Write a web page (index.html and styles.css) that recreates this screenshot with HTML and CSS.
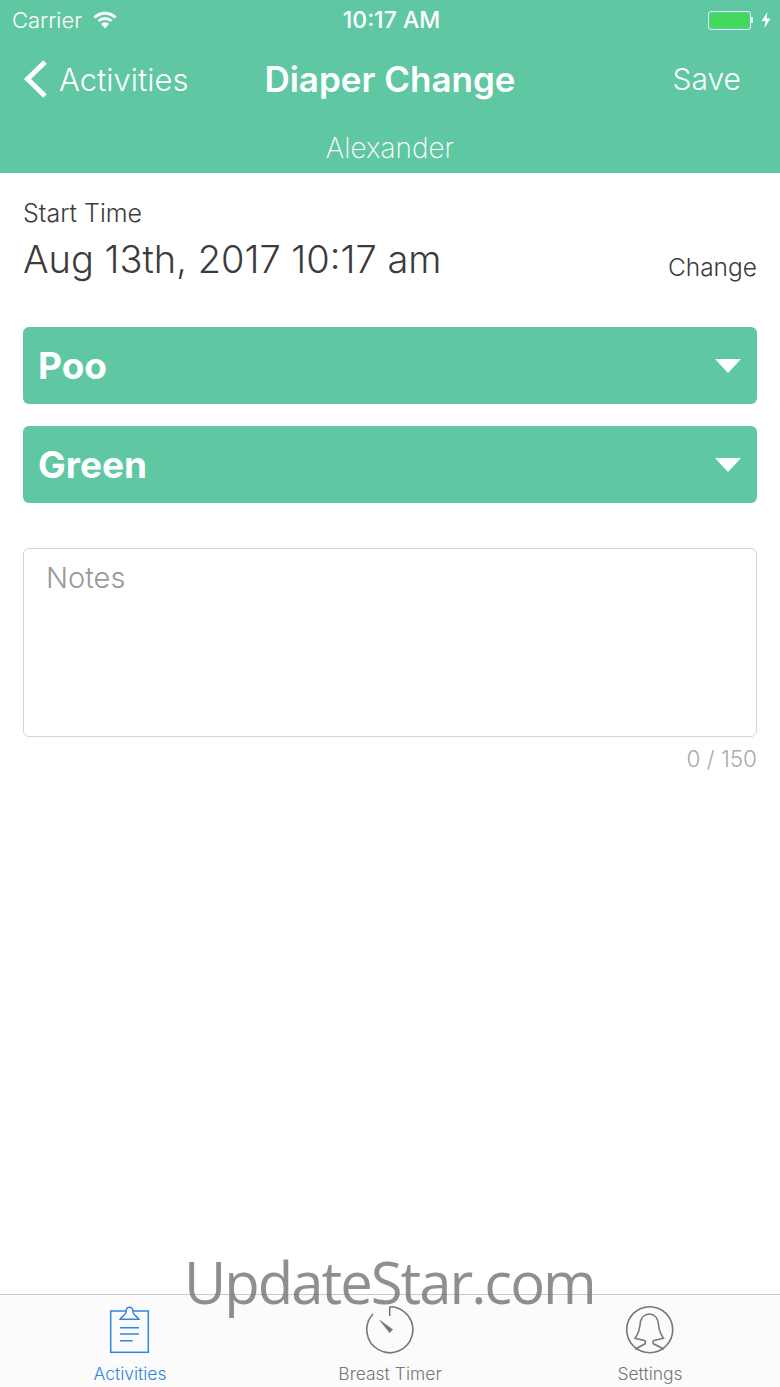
FILE: index.html
```html
<!DOCTYPE html>
<html lang="en">
<head>
  <meta charset="UTF-8">
  <meta name="viewport" content="width=device-width, initial-scale=1.0">
  <title>Diaper Change</title>
  <link rel="stylesheet" href="styles.css">
</head>
<body>
  <div class="app">
    <!-- header -->
    <header class="header">
      <div class="statusBar">
        <div class="statusLeft">
          <span>Carrier</span>
          <svg class="wifi" width="24" height="18" viewBox="0 0 24 18">
            <path d="M1.5 6.5 A15 15 0 0 1 22.500 6.500" />
            <path d="M5.5 10 A9.5 9.5 0 0 1 18.500 10" />
            <path class="wifiDot" d="M12 17.500 L8 12.700 A6 6 0 0 1 16 12.700 Z" />
          </svg>
        </div>
        <div class="statusTime">10:17 AM</div>
        <div class="statusRight">
          <div class="battery"><div class="batteryFill"></div></div>
          <div class="batteryTip"></div>
          <svg width="10" height="16" viewBox="0 0 10 16">
            <path d="M6.5 0 L0.5 9 H4.5 L3.5 16 L9.5 6.5 H5.5 Z" fill="#fff" />
          </svg>
        </div>
      </div>
      <div class="navBar">
        <div class="navLeft">
          <svg width="26" height="40" viewBox="0 0 26 40">
            <path d="M23 3 L5.500 20 L23 37" fill="none" stroke="#fff" stroke-width="5" />
          </svg>
          <span>Activities</span>
        </div>
        <div class="navTitle">Diaper Change</div>
        <div class="navRight">Save</div>
      </div>
      <div class="subtitle">Alexander</div>
    </header>

    <!-- form -->
    <main class="content">
      <div class="timeLabel">Start Time</div>
      <div class="timeRow">
        <div class="timeValue">Aug 13th, 2017 10:17 am</div>
        <div class="timeChange">Change</div>
      </div>

      <div class="dropdown dropdownFirst">
        <span>Poo</span>
        <div class="arrow"></div>
      </div>
      <div class="dropdown">
        <span>Green</span>
        <div class="arrow"></div>
      </div>

      <div class="notes">Notes</div>
      <div class="counter">0 / 150</div>
    </main>

    <!-- tab bar -->
    <nav class="tabBar">
      <div class="tab tabActive">
        <svg width="42" height="50" viewBox="0 0 42 50">
          <g fill="none" stroke="#2f86e0" stroke-width="1.5">
            <rect x="1.700" y="6" width="37.600" height="41.300" />
            <path d="M11 14.300 C13 11 17 10.500 17 7 C17 0.500 24 0.500 24 7 C24 10.500 28 11 30 14.300 Z" fill="#fbfbfb" />
            <path d="M11 22.700 H30 M11 29 H30 M11 35.700 H23.700" />
          </g>
        </svg>
        <span>Activities</span>
      </div>
      <div class="tab">
        <svg width="50" height="50" viewBox="0 0 50 50">
          <g fill="none" stroke="#777" stroke-width="1.6">
            <path d="M24.700 1.700 A23 23 0 1 1 8 9" />
            <path d="M24.700 1.700 V11" />
          </g>
          <path d="M13.500 14 L28 24.500 L24.500 28 Z" fill="#777" />
        </svg>
        <span>Breast Timer</span>
      </div>
      <div class="tab">
        <svg width="50" height="50" viewBox="0 0 50 50">
          <g fill="none" stroke="#777" stroke-width="1.6">
            <circle cx="24.700" cy="24.700" r="23" />
            <path d="M10 44.300 L20 38.800 C21 37 20.500 36 19.500 35.500 L10 33.300 C14 28 14.500 24 15 20 C15.500 12 20 9 24.300 9 C28.500 9 33 12 33.500 20 C34 24 34.500 28 38.500 33.300 L29 35.500 C28 36 27.500 37 28.500 38.800 L39 44.300" />
          </g>
        </svg>
        <span>Settings</span>
      </div>
    </nav>

    <div class="watermark">UpdateStar.com</div>
  </div>
</body>
</html>
```

FILE: styles.css
```css
/* base */
body {
  margin: 0;
  font-family: "Inter", "Liberation Sans", sans-serif;
  color: #3c3c3c;
  background-color: #fff;
}
.app {
  position: relative;
  width: 780px;
  height: 1387px;
  overflow: hidden;
  display: flex;
  flex-direction: column;
}
/* header */
.header {
  height: 173px;
  background-color: #5fc8a2;
  color: #fff;
}
.statusBar {
  height: 40px;
  padding: 0 9px 0 12px;
  display: grid;
  grid-template-columns: 1fr auto 1fr;
  align-items: center;
  font-size: 22px;
  font-weight: 300;
}
.statusLeft {
  display: flex;
  align-items: center;
  gap: 11px;
}
.wifi path {
  fill: none;
  stroke: #fff;
  stroke-width: 3;
}
.wifi .wifiDot {
  fill: #fff;
  stroke: none;
}
.statusTime {
  font-size: 23px;
  font-weight: 500;
}
.statusRight {
  display: flex;
  align-items: center;
  justify-content: flex-end;
}
.battery {
  width: 43px;
  height: 19px;
  box-sizing: border-box;
  border: 1px solid #d8f5e8;
  border-radius: 3px;
  padding: 1px;
}
.batteryFill {
  height: 100%;
  background-color: #43d95d;
  border-radius: 2px;
}
.batteryTip {
  width: 2px;
  height: 6px;
  margin-right: 8px;
  background-color: #d8f5e8;
}
.navBar {
  height: 78px;
  padding: 0 39px 0 22px;
  display: flex;
  align-items: center;
  justify-content: space-between;
  position: relative;
  font-size: 31px;
  font-weight: 300;
}
.navLeft {
  display: flex;
  align-items: center;
  gap: 11px;
}
.navRight {
  font-size: 30px;
}
.navTitle {
  position: absolute;
  left: 0;
  right: 0;
  text-align: center;
  font-size: 35px;
  font-weight: 600;
}
.subtitle {
  padding-top: 13px;
  text-align: center;
  font-size: 28px;
  font-weight: 200;
}
/* form */
.content {
  flex: 1;
  padding: 25px 23px 0;
}
.timeLabel {
  font-size: 25px;
  font-weight: 300;
}
.timeRow {
  margin-top: 8px;
  display: flex;
  justify-content: space-between;
  align-items: flex-end;
}
.timeValue {
  font-size: 38px;
  font-weight: 300;
}
.timeChange {
  font-size: 24.500px;
  font-weight: 300;
}
.dropdown {
  height: 77px;
  margin-top: 22px;
  padding: 0 15px;
  display: flex;
  align-items: center;
  justify-content: space-between;
  background-color: #5fc8a2;
  border-radius: 6px;
  color: #fff;
  font-size: 37px;
  font-weight: 700;
}
.dropdownFirst {
  margin-top: 45px;
}
.arrow {
  width: 0;
  height: 0;
  border-left: 13px solid transparent;
  border-right: 13px solid transparent;
  border-top: 14px solid #fff;
  margin-right: 1px;
}
.notes {
  box-sizing: border-box;
  height: 189px;
  margin-top: 45px;
  padding: 11px 22px;
  border: 1px solid #d5d5d5;
  border-radius: 6px;
  color: #999;
  font-size: 29px;
  font-weight: 300;
}
.counter {
  margin-top: 8px;
  text-align: right;
  color: #aaa;
  font-size: 22.500px;
  font-weight: 300;
}
/* tab bar */
.tabBar {
  height: 92px;
  border-top: 1px solid #c9c9c9;
  background-color: #fbfbfb;
  display: grid;
  grid-template-columns: repeat(3, 260px);
}
.tab {
  padding-top: 10px;
  display: flex;
  flex-direction: column;
  align-items: center;
  color: #777;
  font-size: 17.500px;
  font-weight: 300;
}
.tabActive {
  color: #2f86e0;
}
.tab span {
  margin-top: 8px;
}
/* watermark */
.watermark {
  position: absolute;
  left: 184px;
  top: 1242px;
  font-family: "Open Sans", sans-serif;
  font-size: 58px;
  letter-spacing: -2px;
  color: rgba(115, 115, 115, 0.8);
}
```
